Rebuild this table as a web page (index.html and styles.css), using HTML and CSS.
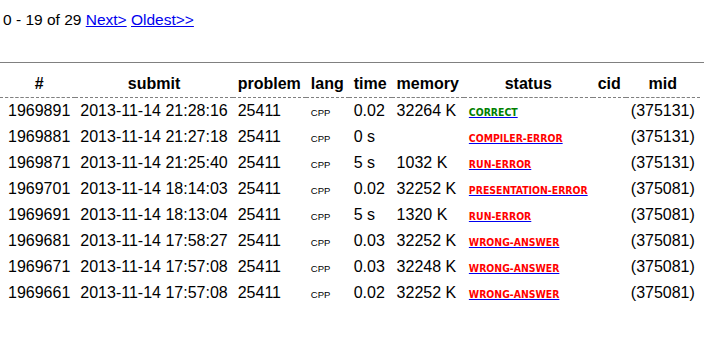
FILE: index.html
```html
<!DOCTYPE html>
<html>
<head>
<meta charset="utf-8">
<title>Status</title>
<link rel="stylesheet" href="styles.css">
</head>
<body>
<p class="pager">0 - 19 of 29 <a href="#">Next&gt;</a> <a href="#">Oldest&gt;&gt;</a></p>
<hr class="rule">
<table class="status-table">
  <thead>
    <tr><th>#</th><th>submit</th><th>problem</th><th>lang</th><th>time</th><th>memory</th><th>status</th><th>cid</th><th>mid</th></tr>
  </thead>
  <tbody>
    <tr><td>1969891</td><td>2013-11-14 21:28:16</td><td>25411</td><td><span class="lang">CPP</span></td><td>0.02</td><td>32264 K</td><td><a class="st" href="#"><span class="ok">CORRECT</span></a></td><td></td><td>(375131)</td></tr>
    <tr><td>1969881</td><td>2013-11-14 21:27:18</td><td>25411</td><td><span class="lang">CPP</span></td><td>0 s</td><td></td><td><a class="st" href="#"><span class="err">COMPILER-ERROR</span></a></td><td></td><td>(375131)</td></tr>
    <tr><td>1969871</td><td>2013-11-14 21:25:40</td><td>25411</td><td><span class="lang">CPP</span></td><td>5 s</td><td>1032 K</td><td><a class="st" href="#"><span class="err">RUN-ERROR</span></a></td><td></td><td>(375131)</td></tr>
    <tr><td>1969701</td><td>2013-11-14 18:14:03</td><td>25411</td><td><span class="lang">CPP</span></td><td>0.02</td><td>32252 K</td><td><a class="st" href="#"><span class="err">PRESENTATION-ERROR</span></a></td><td></td><td>(375081)</td></tr>
    <tr><td>1969691</td><td>2013-11-14 18:13:04</td><td>25411</td><td><span class="lang">CPP</span></td><td>5 s</td><td>1320 K</td><td><a class="st" href="#"><span class="err">RUN-ERROR</span></a></td><td></td><td>(375081)</td></tr>
    <tr><td>1969681</td><td>2013-11-14 17:58:27</td><td>25411</td><td><span class="lang">CPP</span></td><td>0.03</td><td>32252 K</td><td><a class="st" href="#"><span class="err">WRONG-ANSWER</span></a></td><td></td><td>(375081)</td></tr>
    <tr><td>1969671</td><td>2013-11-14 17:57:08</td><td>25411</td><td><span class="lang">CPP</span></td><td>0.03</td><td>32248 K</td><td><a class="st" href="#"><span class="err">WRONG-ANSWER</span></a></td><td></td><td>(375081)</td></tr>
    <tr><td>1969661</td><td>2013-11-14 17:57:08</td><td>25411</td><td><span class="lang">CPP</span></td><td>0.02</td><td>32252 K</td><td><a class="st" href="#"><span class="err">WRONG-ANSWER</span></a></td><td></td><td>(375081)</td></tr>
  </tbody>
</table>
</body>
</html>
```
FILE: styles.css
```css
html, body {
  margin: 0;
  padding: 0;
  background: #ffffff;
  color: #000000;
  font-family: "Liberation Sans", Arial, sans-serif;
  font-size: 16px;
}

.pager {
  margin: 0;
  padding: 11px 0 0 3px;
  font-size: 15.5px;
  line-height: 17px;
}

.pager a {
  color: #0000ee;
}

.rule {
  border: 0;
  border-top: 1px solid #808080;
  height: 0;
  margin: 34px 0 8px 0;
}

.status-table {
  border-collapse: collapse;
  border-spacing: 0;
  margin: 0;
}

.status-table th,
.status-table td {
  padding: 4px 5px;
  height: 18px;
  line-height: 18px;
  white-space: nowrap;
  vertical-align: baseline;
}

.status-table th:first-child,
.status-table td:first-child {
  padding-left: 8px;
}

.status-table th {
  font-weight: bold;
  text-align: center;
  border-bottom: 1px dashed #808080;
}

.status-table td {
  text-align: left;
}

.lang {
  color: #000000;
  font-size: 9.5px;
  line-height: 8px;
}

.st {
  color: #0000ee;
  text-decoration: underline;
  font-family: "DejaVu Sans Condensed", "DejaVu Sans", Verdana, sans-serif;
  font-stretch: condensed;
  font-weight: bold;
  font-size: 10.4px;
  line-height: 8px;
}

.ok {
  color: #008000;
}

.err {
  color: #ff0000;
}
```
